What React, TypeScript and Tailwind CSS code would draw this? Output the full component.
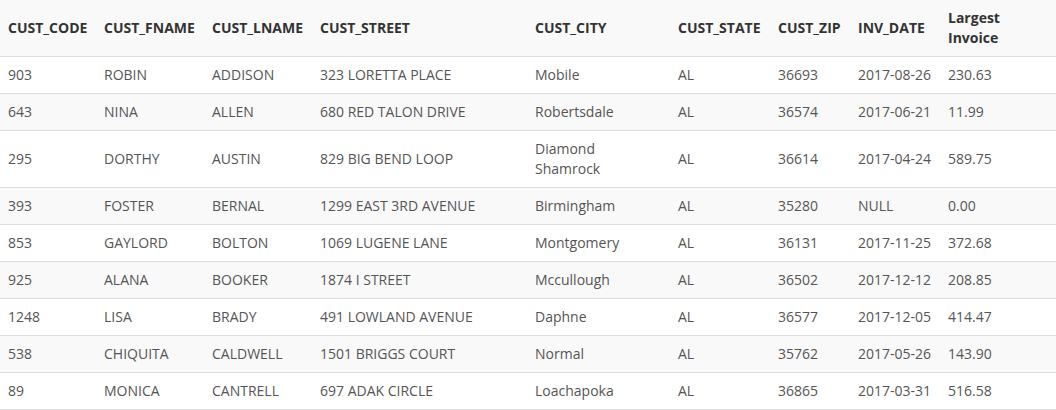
const columns = [
  { key: 'code', label: 'CUST_CODE', w: 'w-[96px]' },
  { key: 'fname', label: 'CUST_FNAME', w: 'w-[108px]' },
  { key: 'lname', label: 'CUST_LNAME', w: 'w-[108px]' },
  { key: 'street', label: 'CUST_STREET', w: 'w-[215px]' },
  { key: 'city', label: 'CUST_CITY', w: 'w-[143px]' },
  { key: 'state', label: 'CUST_STATE', w: 'w-[100px]' },
  { key: 'zip', label: 'CUST_ZIP', w: 'w-[80px]' },
  { key: 'date', label: 'INV_DATE', w: 'w-[90px]' },
  { key: 'largest', label: 'Largest Invoice', w: 'w-[116px]' },
]

const rows = [
  ['903', 'ROBIN', 'ADDISON', '323 LORETTA PLACE', 'Mobile', 'AL', '36693', '2017-08-26', '230.63'],
  ['643', 'NINA', 'ALLEN', '680 RED TALON DRIVE', 'Robertsdale', 'AL', '36574', '2017-06-21', '11.99'],
  ['295', 'DORTHY', 'AUSTIN', '829 BIG BEND LOOP', 'Diamond Shamrock', 'AL', '36614', '2017-04-24', '589.75'],
  ['393', 'FOSTER', 'BERNAL', '1299 EAST 3RD AVENUE', 'Birmingham', 'AL', '35280', 'NULL', '0.00'],
  ['853', 'GAYLORD', 'BOLTON', '1069 LUGENE LANE', 'Montgomery', 'AL', '36131', '2017-11-25', '372.68'],
  ['925', 'ALANA', 'BOOKER', '1874 I STREET', 'Mccullough', 'AL', '36502', '2017-12-12', '208.85'],
  ['1248', 'LISA', 'BRADY', '491 LOWLAND AVENUE', 'Daphne', 'AL', '36577', '2017-12-05', '414.47'],
  ['538', 'CHIQUITA', 'CALDWELL', '1501 BRIGGS COURT', 'Normal', 'AL', '35762', '2017-05-26', '143.90'],
  ['89', 'MONICA', 'CANTRELL', '697 ADAK CIRCLE', 'Loachapoka', 'AL', '36865', '2017-03-31', '516.58'],
]

export default function App() {
  return (
    <div className="w-[1056px] bg-white font-['Open_Sans',sans-serif] text-[14px] leading-[20px]">
      <table className="w-full table-fixed border-collapse">
        <thead>
          <tr className="bg-[#f9f9f9] border-b border-[#dddddd]">
            {columns.map(c => (
              <th
                key={c.key}
                className={`${c.w} h-[56px] px-2 py-2 text-left align-middle font-bold text-[#333333] ${c.key === 'largest' ? 'pr-4' : ''}`}
              >
                {c.label}
              </th>
            ))}
          </tr>
        </thead>
        <tbody>
          {rows.map((r, i) => (
            <tr
              key={r[0]}
              className={`border-b border-[#dddddd] ${i % 2 === 1 ? 'bg-[#f9f9f9]' : 'bg-white'}`}
            >
              {r.map((v, j) => (
                <td
                  key={j}
                  className={`px-2 py-2 align-middle text-[#555555] ${j === 4 ? 'pr-6' : ''}`}
                >
                  {v}
                </td>
              ))}
            </tr>
          ))}
        </tbody>
      </table>
    </div>
  )
}
